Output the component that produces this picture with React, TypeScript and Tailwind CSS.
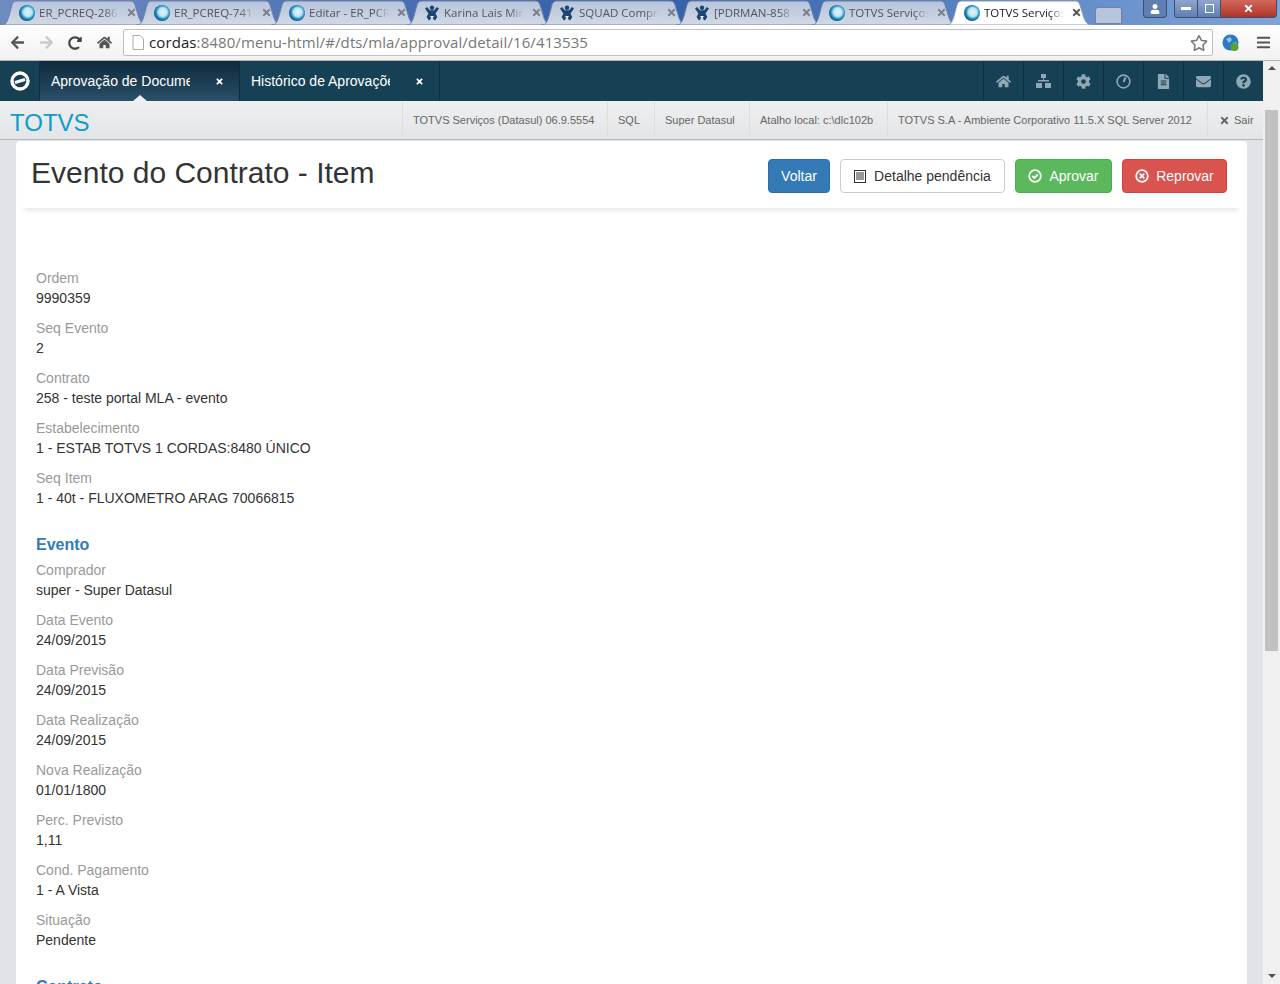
import { FaHome, FaCog, FaFileAlt, FaEnvelope, FaQuestionCircle, FaTimes, FaArrowLeft, FaArrowRight, FaRedoAlt, FaRegStar, FaBars, FaUser } from 'react-icons/fa';

const tabs = [
  { title: 'ER_PCREQ-286', icon: 'totvs' },
  { title: 'ER_PCREQ-741', icon: 'totvs' },
  { title: 'Editar - ER_PCR', icon: 'totvs' },
  { title: 'Karina Lais Mira', icon: 'jira' },
  { title: 'SQUAD Compr', icon: 'jira' },
  { title: '[PDRMAN-858', icon: 'jira' },
  { title: 'TOTVS Serviços', icon: 'totvs' },
  { title: 'TOTVS Serviços', icon: 'totvs', active: true },
];

const topFields = [
  ['Ordem', '9990359'],
  ['Seq Evento', '2'],
  ['Contrato', '258 - teste portal MLA - evento'],
  ['Estabelecimento', '1 - ESTAB TOTVS 1 CORDAS:8480 ÚNICO'],
  ['Seq Item', '1 - 40t - FLUXOMETRO ARAG 70066815'],
];

const eventFields = [
  ['Comprador', 'super - Super Datasul'],
  ['Data Evento', '24/09/2015'],
  ['Data Previsão', '24/09/2015'],
  ['Data Realização', '24/09/2015'],
  ['Nova Realização', '01/01/1800'],
  ['Perc. Previsto', '1,11'],
  ['Cond. Pagamento', '1 - A Vista'],
  ['Situação', 'Pendente'],
];

const infoItems = [
  { text: 'TOTVS Serviços (Datasul) 06.9.5554', width: 'w-[205px]' },
  { text: 'SQL', width: 'w-[47px]' },
  { text: 'Super Datasul', width: 'w-[95px]' },
  { text: 'Atalho local: c:\\dlc102b', width: 'w-[138px]' },
  { text: 'TOTVS S.A - Ambiente Corporativo 11.5.X SQL Server 2012', width: 'w-[320px]' },
];

function TotvsFavicon() {
  return (
    <svg width="16" height="16" viewBox="0 0 16 16" className="shrink-0">
      <defs>
        <radialGradient id="totvsBall" cx="55%" cy="45%" r="60%">
          <stop offset="0%" stopColor="#e4f3f8" />
          <stop offset="45%" stopColor="#bfe3f0" />
          <stop offset="70%" stopColor="#1b8fc2" />
          <stop offset="100%" stopColor="#0b3f6b" />
        </radialGradient>
      </defs>
      <circle cx="8" cy="8" r="8" fill="url(#totvsBall)" />
    </svg>
  );
}

function JiraFavicon() {
  return (
    <svg width="16" height="16" viewBox="0 0 16 16" className="shrink-0">
      <circle cx="8" cy="2.800" r="2.200" fill="#1d4570" />
      <path d="M1 3.500l2.200-1.500 2.600 3.200h4.400l2.600-3.200 2.200 1.500-3.500 5 1.800 3.500-2.300 3.500-1.500-1-.6-2.500H7l-.6 2.500-1.500 1-2.300-3.500 1.800-3.500z" fill="#1d4570" />
      <path d="M5.500 11l2.500 1.500 2.500-1.500" fill="#fff" />
    </svg>
  );
}

function BrowserTab({ title, icon, active }: { title: string; icon: string; active?: boolean }) {
  return (
    <div className={`relative w-[135px] h-[25px] shrink-0 flex items-center pl-[9px] ${active ? 'z-10' : ''}`}>
      <svg width="147" height="25" viewBox="0 0 147 25" className="absolute left-[-9px] top-0">
        <defs>
          <linearGradient id="tabIdle" x1="0" y1="0" x2="0" y2="1">
            <stop offset="0%" stopColor="#b6c4dc" />
            <stop offset="100%" stopColor="#d2d9e6" />
          </linearGradient>
        </defs>
        <path
          d="M0.500 25 C5 25 6 22 8 16 L11 5 C12 2 13 1 17 1 H128 C132 1 133 2 134 5 L138 18 C140 23 142 25 146.500 25 Z"
          fill={active ? '#ffffff' : 'url(#tabIdle)'}
          stroke={active ? '#8a9ab5' : '#6f83a6'}
          strokeWidth="1"
        />
      </svg>
      <div className="relative flex items-center w-full">
        {icon === 'totvs' ? <TotvsFavicon /> : <JiraFavicon />}
        <span className={`ml-[4px] w-[80px] overflow-hidden whitespace-nowrap text-[11.5px] font-['Open_Sans',sans-serif] [mask-image:linear-gradient(to_right,black_82%,transparent)] ${active ? 'text-[#222]' : 'text-[#555]'}`}>
          {title}
        </span>
        <FaTimes className={`ml-[7px] text-[11px] ${active ? 'text-[#555]' : 'text-[#7b7f88]'}`} />
      </div>
    </div>
  );
}

function NavTab({ title, active }: { title: string; active?: boolean }) {
  return (
    <div className={`relative w-[200px] h-full flex items-center pl-[11px] border-r border-[#0e2c3d] ${active ? 'bg-gradient-to-b from-[#0e2a3c] to-[#2a5068]' : ''}`}>
      <span className="w-[139px] overflow-hidden whitespace-nowrap text-[14px] text-white">{title}</span>
      <FaTimes className="ml-[25px] text-[9px] text-white" />
      {active && (
        <div className="absolute left-[93px] bottom-0 w-0 h-0 border-x-[7px] border-x-transparent border-b-[6px] border-b-[#eeeff0]" />
      )}
    </div>
  );
}

function Field({ label, value }: { label: string; value: string }) {
  return (
    <div className="mb-[10px]">
      <div className="h-[20px] leading-[20px] text-[14px] text-[#999]">{label}</div>
      <div className="h-[20px] leading-[20px] text-[14px] text-[#333]">{value}</div>
    </div>
  );
}

function ClockIcon() {
  return (
    <svg width="15" height="15" viewBox="0 0 15 15" fill="none" stroke="#8fa8b5" strokeWidth="1.600">
      <circle cx="7.500" cy="7.500" r="6.400" />
      <path d="M9.500 3.500L7.500 8" strokeWidth="2" />
    </svg>
  );
}

function SitemapIcon() {
  return (
    <svg width="15" height="14" viewBox="0 0 15 14" fill="#8fa8b5">
      <rect x="5" y="0" width="5" height="4" />
      <rect x="7" y="4" width="1" height="2" />
      <rect x="2" y="6" width="11" height="1.500" />
      <rect x="0" y="9" width="6" height="5" />
      <rect x="9" y="9" width="6" height="5" />
    </svg>
  );
}

export default function App() {
  return (
    <div className="w-[1280px] h-[984px] overflow-hidden flex flex-col font-['Liberation_Sans',Arial,sans-serif] bg-[#e0e4e8]">
      {/* abas do navegador */}
      <div className="relative h-[25px] shrink-0 flex pl-[10px] bg-gradient-to-r from-[#6f8cc0] via-[#2f5ea8] to-[#7fa4d8]">
        {tabs.map((t, i) => (
          <BrowserTab key={i} title={t.title} icon={t.icon} active={t.active} />
        ))}
        <div className="w-[27px] h-[17px] mt-[7px] ml-[5px] bg-[#b6c4dc] border border-[#6f83a6] rounded-t-[3px] -skew-x-[20px] z-0" />
        <div className="absolute top-0 right-[3px] flex">
          <div className="w-[24px] h-[18px] mr-[7px] flex items-center justify-center bg-[#5f7fb3] border border-[#3d4f6d] border-t-0 rounded-b-[4px]">
            <FaUser className="text-[10px] text-white" />
          </div>
          <div className="w-[24px] h-[18px] flex items-center justify-center bg-gradient-to-b from-[#8ea6cc] to-[#5f7fb3] border border-[#3d4f6d] border-t-0 rounded-bl-[4px]">
            <div className="w-[10px] h-[3px] bg-white" />
          </div>
          <div className="w-[23px] h-[18px] flex items-center justify-center bg-gradient-to-b from-[#8ea6cc] to-[#5f7fb3] border border-l-0 border-[#3d4f6d] border-t-0">
            <div className="w-[9px] h-[9px] border border-white" />
          </div>
          <div className="w-[56px] h-[18px] flex items-center justify-center bg-gradient-to-b from-[#d0685c] to-[#b03226] border border-l-0 border-[#3d4f6d] border-t-0 rounded-br-[4px]">
            <FaTimes className="text-[11px] text-white" />
          </div>
        </div>
      </div>

      {/* barra de endereço */}
      <div className="h-[36px] shrink-0 flex items-center pl-[10px] bg-gradient-to-b from-[#ffffff] to-[#f1f1f1] border-b border-[#b5b5b5]">
        <FaArrowLeft className="text-[15px] text-[#555]" />
        <FaArrowRight className="ml-[14px] text-[15px] text-[#c8c8c8]" />
        <FaRedoAlt className="ml-[14px] text-[14px] text-[#444]" />
        <FaHome className="ml-[15px] text-[15px] text-[#555]" />
        <div className="ml-[11px] w-[1090px] h-[27px] flex items-center pl-[8px] bg-white border border-[#c0c0c0] rounded-[2px]">
          <svg width="12" height="15" viewBox="0 0 12 15" className="shrink-0">
            <path d="M1 .5h7l3.500 3.500v10.500H1z" fill="#fff" stroke="#aaa" />
          </svg>
          <span className="ml-[5px] text-[15px] tracking-[0.1px] font-['Open_Sans',sans-serif] text-[#777]">
            <span className="text-[#222]">cordas</span>:8480/menu-html/#/dts/mla/approval/detail/16/413535
          </span>
          <FaRegStar className="ml-auto mr-[4px] text-[18px] text-[#777]" />
        </div>
        <svg width="18" height="18" viewBox="0 0 18 18" className="ml-[9px]">
          <circle cx="8.500" cy="8.500" r="8" fill="#2b78c5" />
          <path d="M4 5l4-2 2 3-3 3zM10 10l3-2 2 1-2 3z" fill="#8fc4ea" />
          <circle cx="12.500" cy="13" r="4" fill="#5aa02c" />
        </svg>
        <FaBars className="ml-[16px] text-[15px] text-[#555]" />
      </div>

      <div className="flex-1 min-h-0 flex">
        <div className="w-[1263px] flex flex-col min-h-0">
          {/* menu principal */}
          <div className="h-[40px] shrink-0 flex bg-[#164154]">
            <div className="w-[40px] h-full flex items-center justify-center border-r border-[#0e2c3d]">
              <svg width="20" height="20" viewBox="0 0 20 20" fill="none">
                <circle cx="10" cy="10" r="8" stroke="#fff" strokeWidth="3.400" />
                <path d="M5 11.500L15 8.500" stroke="#fff" strokeWidth="3" />
              </svg>
            </div>
            <NavTab title="Aprovação de Documentos" active />
            <NavTab title="Histórico de Aprovações" />
            <div className="ml-auto flex h-full">
              {[<FaHome key="h" />, <SitemapIcon key="s" />, <FaCog key="c" />, <ClockIcon key="t" />, <FaFileAlt key="f" />, <FaEnvelope key="e" />, <FaQuestionCircle key="q" />].map((icon, i) => (
                <div key={i} className="w-[40px] h-full flex items-center justify-center border-l border-[#0e2c3d] text-[15px] text-[#8fa8b5]">
                  {icon}
                </div>
              ))}
            </div>
          </div>

          {/* barra de informações */}
          <div className="h-[39px] shrink-0 flex items-center bg-gradient-to-b from-[#eeeff0] to-[#e3e5e8] border-b border-[#b5b5b5]">
            <span className="ml-[10px] mt-[6px] text-[24px] text-[#0d9ccd] leading-none">TOTVS</span>
            <div className="ml-auto flex h-[36px]">
              {infoItems.map(item => (
                <div key={item.text} className={`${item.width} h-full shrink-0 flex items-center pl-[10px] whitespace-nowrap border-l border-[#dcdee0] text-[11px] text-[#666]`}>
                  {item.text}
                </div>
              ))}
              <div className="w-[56px] h-full flex items-center pl-[11px] border-l border-[#dcdee0] text-[11px] text-[#666]">
                <FaTimes className="mr-[4px] text-[11px]" />
                Sair
              </div>
            </div>
          </div>

          {/* conteúdo */}
          <div className="flex-1 min-h-0 pl-[16px] pr-[16px] pt-[1px] overflow-hidden">
            <div className="h-full bg-white rounded-t-[4px] overflow-hidden">
              <div className="h-[67px] mx-[6px] px-[9px] flex items-start justify-between shadow-[0_5px_5px_-3px_rgba(0,0,0,0.12)]">
                <h1 className="mt-[12px] text-[30px] leading-[40px] text-[#333]">Evento do Contrato - Item</h1>
                <div className="flex gap-[10px] mt-[18px] mr-[5px]">
                  <button className="h-[34px] w-[62px] rounded-[4px] bg-[#337ab7] border border-[#2e6da4] text-[14px] text-white">Voltar</button>
                  <button className="h-[34px] w-[165px] flex items-center justify-center rounded-[4px] bg-white border border-[#ccc] text-[14px] text-[#333]">
                    <svg width="12" height="13" viewBox="0 0 12 13" className="mr-[8px]">
                      <rect x=".5" y=".5" width="11" height="12" fill="#fff" stroke="#333" />
                      <path d="M2 3h8M2 5h8M2 7h8M2 9h8" stroke="#333" strokeWidth="1.200" />
                    </svg>
                    Detalhe pendência
                  </button>
                  <button className="h-[34px] w-[97px] flex items-center justify-center rounded-[4px] bg-[#5cb85c] border border-[#4cae4c] text-[14px] text-white">
                    <svg width="14" height="14" viewBox="0 0 14 14" fill="none" className="mr-[7px]">
                      <circle cx="7" cy="7" r="5.800" stroke="#fff" strokeWidth="1.800" />
                      <path d="M4.300 7l2 2 3.500-3.500" stroke="#fff" strokeWidth="1.800" />
                    </svg>
                    Aprovar
                  </button>
                  <button className="h-[34px] w-[105px] flex items-center justify-center rounded-[4px] bg-[#d9534f] border border-[#d43f3a] text-[14px] text-white">
                    <svg width="14" height="14" viewBox="0 0 14 14" fill="none" className="mr-[7px]">
                      <circle cx="7" cy="7" r="5.800" stroke="#fff" strokeWidth="1.800" />
                      <path d="M4.700 4.700l4.600 4.600M9.300 4.700l-4.600 4.600" stroke="#fff" strokeWidth="1.800" />
                    </svg>
                    Reprovar
                  </button>
                </div>
              </div>

              <div className="pl-[20px] pt-[60px]">
                {topFields.map(([label, value]) => (
                  <Field key={label} label={label} value={value} />
                ))}
                <h3 className="mt-[26px] mb-[4px] h-[22px] leading-[22px] text-[16px] font-bold text-[#337ab7]">Evento</h3>
                {eventFields.map(([label, value]) => (
                  <Field key={label} label={label} value={value} />
                ))}
                <h3 className="mt-[26px] mb-[4px] h-[22px] leading-[22px] text-[16px] font-bold text-[#337ab7]">Contrato</h3>
              </div>
            </div>
          </div>
        </div>

        {/* barra de rolagem */}
        <div className="w-[17px] flex flex-col items-center bg-[#f0f0f0]">
          <div className="mt-[5px] w-0 h-0 border-x-[4px] border-x-transparent border-b-[4px] border-b-[#505050]" />
          <div className="mt-[40px] w-[13px] h-[541px] bg-[#c1c1c1]" />
          <div className="mt-auto mb-[6px] w-0 h-0 border-x-[4px] border-x-transparent border-t-[4px] border-t-[#505050]" />
        </div>
      </div>
    </div>
  );
}
